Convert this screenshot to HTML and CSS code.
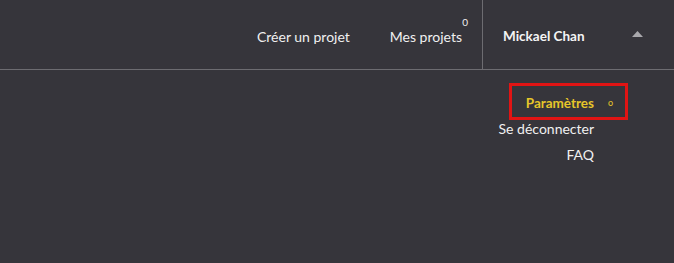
FILE: index.html
```html
<!DOCTYPE html>
<html lang="fr">
<head>
<meta charset="utf-8">
<link rel="stylesheet" href="styles.css">
</head>
<body>
<header class="topbar">
  <nav class="nav">
    <a class="nav-link" href="#">Créer un projet</a>
    <a class="nav-link" href="#">Mes projets<sup class="count">0</sup></a>
  </nav>
  <div class="user">
    <span class="user-name">Mickael Chan</span>
    <svg class="caret" width="11" height="6" viewBox="0 0 11 6"><polygon points="5.5,0 11,6 0,6" fill="#a9a8ac"/></svg>
  </div>
</header>
<ul class="menu">
  <li class="menu-item active">Paramètres<span class="dot">o</span><span class="highlight"></span></li>
  <li class="menu-item">Se déconnecter</li>
  <li class="menu-item">FAQ</li>
</ul>
</body>
</html>
```
FILE: styles.css
```css
html, body {
  margin: 0;
  padding: 0;
  background: #36353b;
  height: 100%;
}
body {
  font-family: "Lato", "DejaVu Sans", sans-serif;
  color: #f0f0f0;
  font-size: 14px;
}
.topbar {
  display: flex;
  justify-content: flex-end;
  height: 69px;
  border-bottom: 1px solid #6d6c71;
}
.nav {
  display: flex;
  align-items: center;
  gap: 40px;
  padding: 3px 20px 0 0;
}
.nav-link {
  color: #f0f0f0;
  text-decoration: none;
  position: relative;
}
.count {
  font-size: 10px;
  position: absolute;
  top: -12px;
  right: -6px;
}
.user {
  display: flex;
  align-items: center;
  justify-content: space-between;
  width: 140px;
  padding: 3px 31px 0 20px;
  border-left: 1px solid #6d6c71;
}
.user-name {
  font-weight: 700;
  color: #f4f4f4;
  font-size: 13.5px;
}
.caret {
  margin-top: -4px;
}
.menu {
  list-style: none;
  margin: 20px 0 0;
  padding: 0 80px 0 0;
  display: flex;
  flex-direction: column;
  align-items: flex-end;
}
.menu-item {
  line-height: 26px;
  position: relative;
}
.menu-item.active {
  color: #e6c62a;
  font-weight: 700;
  font-size: 13.5px;
}
.dot {
  position: absolute;
  right: -19px;
  top: 0;
  font-size: 9px;
  font-weight: 400;
}
.highlight {
  position: absolute;
  left: -17px;
  right: -34px;
  top: -7px;
  bottom: -4px;
  border: 3px solid #e11414;
}
```
